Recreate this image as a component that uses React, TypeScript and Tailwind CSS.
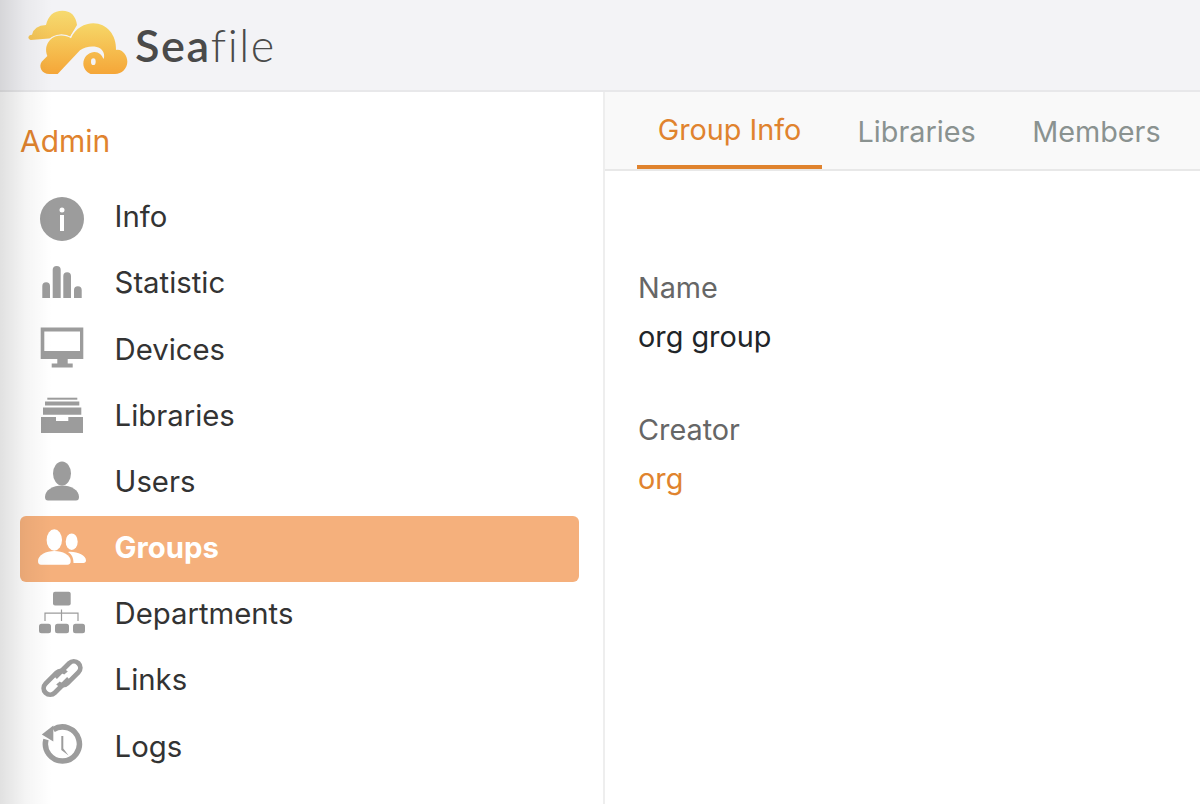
import type { ReactNode } from 'react';

function SeafileLogo() {
  return (
    <svg width="115" height="75" viewBox="0 0 345 225" className="shrink-0">
      <defs>
        <linearGradient id="cloud" x1="0" y1="0" x2="0" y2="1">
          <stop offset="0" stopColor="#f6d768" />
          <stop offset="1" stopColor="#f5a638" />
        </linearGradient>
        <linearGradient id="cloudBack" x1="0" y1="0" x2="0" y2="1">
          <stop offset="0" stopColor="#f6da70" />
          <stop offset="1" stopColor="#f5c355" />
        </linearGradient>
      </defs>
      <path
        d="M25 97 Q26 90 36 89 Q42 62 78 60 Q88 17 127 17 Q165 17 171 60 L150 95 L32 105 Q25 104 25 97 Z"
        fill="url(#cloudBack)"
      />
      <path
        d="M153 100 C165 70 195 55 220 55 C260 55 290 90 288 135 C305 130 322 150 322 170 C322 190 305 207 285 207 L88 207 C65 207 55 185 65 170 L82 153 C75 135 78 118 90 105 C105 88 135 88 153 100 Z"
        fill="url(#cloud)"
        stroke="#f3f3f6"
        strokeWidth="7"
        paintOrder="stroke"
      />
      <path
        d="M108 212 L180 136 C195 124 225 120 240 130 C251 138 255 150 251 162 C245 150 236 140 222 141 C203 143 190 158 190 176 C190 190 200 205 225 212 Z"
        fill="#f3f3f6"
      />
      <ellipse cx="220" cy="170" rx="7" ry="10" fill="#f3f3f6" />
    </svg>
  );
}

function InfoIcon() {
  return (
    <svg width="48" height="48" viewBox="0 0 48 48" fill="#9c9c9c">
      <path
        fillRule="evenodd"
        d="M24 3a22 22 0 1 0 0 44a22 22 0 1 0 0-44Z M24 13.5a2.5 2.5 0 1 0 0 5a2.5 2.5 0 1 0 0-5Z M22 21v16h4V21Z"
      />
    </svg>
  );
}

function StatisticIcon() {
  return (
    <svg width="48" height="48" viewBox="0 0 48 48" fill="#9c9c9c">
      <path d="M4.3 38V26a3.8 3.8 0 0 1 7.7 0v12Z" />
      <path d="M14.7 38V10a4 4 0 0 1 8 0v28Z" />
      <path d="M25.3 38V16a3.8 3.8 0 0 1 7.7 0v22Z" />
      <path d="M36 38V30a3.8 3.8 0 0 1 7.7 0v8Z" />
    </svg>
  );
}

function DevicesIcon() {
  return (
    <svg width="48" height="48" viewBox="0 0 48 48" fill="#9c9c9c">
      <path
        fillRule="evenodd"
        d="M2.7 1.6h42.6V33H2.7Z M6.3 5.6V25H42V5.6Z"
      />
      <path d="M19.3 33h10.4v4.6h5v4h-21v-4h5.6Z" />
    </svg>
  );
}

function LibrariesIcon() {
  return (
    <svg width="48" height="48" viewBox="0 0 48 48" fill="#9c9c9c">
      <path d="M9.3 4.7h30v2h-30Z" />
      <path d="M7 8.4h34.3v4H7Z" />
      <path d="M5 14.4h38.3v7.3H5Z" />
      <path d="M3 24h15v4h12.3v-4H45v16H3Z" />
    </svg>
  );
}

function UsersIcon() {
  return (
    <svg width="48" height="48" viewBox="0 0 48 48" fill="#9c9c9c">
      <ellipse cx="24" cy="14.5" rx="9" ry="12" />
      <path d="M7 38C7 31 15 26.5 24 26.5S41 31 41 38C41 40.5 40 41.5 38 41.5H10C8 41.5 7 40.5 7 38Z" />
    </svg>
  );
}

function GroupsIcon() {
  return (
    <svg width="48" height="48" viewBox="0 0 48 48" fill="#ffffff">
      <ellipse cx="16.3" cy="15" rx="7.7" ry="10.7" />
      <path d="M0 36C0 30 8 26 16.3 26S32.7 30 32.7 36C32.7 38.5 31.5 39.7 29.5 39.7H3C1 39.7 0 38.5 0 36Z" />
      <ellipse cx="33.7" cy="16.7" rx="6" ry="8.3" />
      <path d="M30 27C38 26 48 30 48 35.5C48 37 47 38 45.5 38H35.5C35.5 33 34 29.5 30 27Z" />
    </svg>
  );
}

function DepartmentsIcon() {
  return (
    <svg width="48" height="48" viewBox="0 0 48 48" fill="#9c9c9c">
      <rect x="15" y="0.8" width="17.7" height="13.7" rx="2" />
      <path d="M7 30V22.1H40V30M23.5 18.5V30" fill="none" stroke="#9c9c9c" strokeWidth="1.2" />
      <rect x="1" y="32.8" width="12" height="9.4" rx="2.5" />
      <rect x="17" y="32.8" width="14" height="9.4" rx="2.5" />
      <rect x="35" y="32.8" width="12" height="9.4" rx="2.5" />
    </svg>
  );
}

function LinksIcon() {
  return (
    <svg width="48" height="48" viewBox="0 0 48 48" fill="none" stroke="#9c9c9c" strokeWidth="4.8">
      <path d="M17.2 20.2L31.2 6.2A6.5 6.5 0 0 1 40.4 15.4L29.4 26.4A6.5 6.5 0 0 1 20 26" />
      <path d="M30.8 21.8L16.8 35.8A6.5 6.5 0 0 1 7.6 26.6L18.6 15.6A6.5 6.5 0 0 1 28 16" />
    </svg>
  );
}

function LogsIcon() {
  return (
    <svg width="48" height="48" viewBox="0 0 48 48" fill="none" stroke="#9c9c9c">
      <path d="M15.3 5.6A17 17 0 1 1 8 15.5" strokeWidth="5.5" />
      <path d="M3.8 10.4L15.3 1.6V17.4Z" fill="#9c9c9c" stroke="none" />
      <path d="M23.3 12H25.3V24.5L30.6 31.5L23.3 26Z" fill="#9c9c9c" stroke="none" />
    </svg>
  );
}

const navItems: { label: string; icon: ReactNode; active?: boolean }[] = [
  { label: 'Info', icon: <InfoIcon /> },
  { label: 'Statistic', icon: <StatisticIcon /> },
  { label: 'Devices', icon: <DevicesIcon /> },
  { label: 'Libraries', icon: <LibrariesIcon /> },
  { label: 'Users', icon: <UsersIcon /> },
  { label: 'Groups', icon: <GroupsIcon />, active: true },
  { label: 'Departments', icon: <DepartmentsIcon /> },
  { label: 'Links', icon: <LinksIcon /> },
  { label: 'Logs', icon: <LogsIcon /> },
];

export default function App() {
  return (
    <div className="relative flex h-[804px] w-[1200px] flex-col overflow-hidden bg-white font-['Inter',sans-serif] text-[28.8px]">
      {/* Header */}
      <header className="flex h-[92px] shrink-0 items-start border-b-2 border-[#e8e8ea] bg-[#f3f3f6] pl-[20px] pt-[5px]">
        <SeafileLogo />
        <span className="mt-[7px] font-['Lato',sans-serif] text-[45px] font-semibold leading-[66px] tracking-[1.6px] text-[#4a4a4a]">
          <span>Sea</span>
          <span className="font-light">file</span>
        </span>
      </header>

      <div className="flex min-h-0 flex-1">
        {/* Sidebar */}
        <aside className="w-[605px] shrink-0 border-r-2 border-[#eeeeee] pl-[20px] pr-[24px]">
          <h3 className="mb-[24px] mt-[29px] text-[30px] leading-[40px] text-[#e0832e]">Admin</h3>
          <nav className="flex flex-col text-[29.3px]">
            {navItems.map((item) => (
              <a
                key={item.label}
                className={
                  item.active
                    ? 'flex h-[66.2px] items-center gap-[28.6px] rounded-[6px] bg-[#f5b07c] pl-[18px] font-bold text-white'
                    : 'flex h-[66.2px] items-center gap-[28.6px] rounded-[6px] pl-[18px] text-[#333333]'
                }
              >
                <span className="shrink-0">{item.icon}</span>
                <span className="relative top-[-1px]">{item.label}</span>
              </a>
            ))}
          </nav>
        </aside>

        {/* Main */}
        <main className="min-w-0 flex-1">
          <div className="flex h-[79px] gap-[14.5px] border-b-2 border-[#e8e8e8] bg-[#f9f9f9] pl-[32px]">
            <div className="flex h-[77px] w-[185px] items-center justify-center border-b-4 border-[#e0832e] pt-[3px] text-[#e0832e]">Group Info</div>
            <div className="flex h-[77px] items-center px-[21px] pt-[3px] text-[#8a9290]">Libraries</div>
            <div className="flex h-[77px] items-center px-[21px] pt-[3px] text-[#8a9290]">Members</div>
          </div>
          <dl className="pl-[33px] pt-[95px] [&>dd]:mt-[5px]">
            <dt className="leading-[44px] text-[#666666]">Name</dt>
            <dd className="leading-[44px] text-[#212529]">org group</dd>
            <dt className="mt-[49px] leading-[44px] text-[#666666]">Creator</dt>
            <dd className="leading-[44px] text-[#e0832e]">org</dd>
          </dl>
        </main>
      </div>

      {/* soft shadow on the left edge */}
      <div className="pointer-events-none absolute inset-y-0 left-0 w-[52px] bg-gradient-to-r from-black/12 via-black/4 to-transparent" />
    </div>
  );
}
